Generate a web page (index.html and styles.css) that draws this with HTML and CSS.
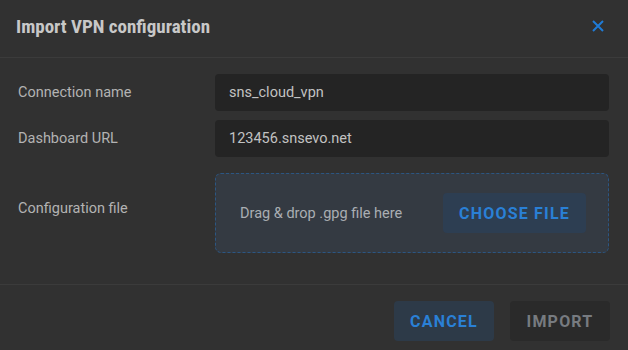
FILE: index.html
```html
<!DOCTYPE html>
<html>
<head>
<meta charset="utf-8">
<link rel="stylesheet" href="styles.css">
</head>
<body>
<div class="dialog">
  <header class="dialog-header">
    <h1 class="dialog-title">Import VPN configuration</h1>
    <button class="close-btn" aria-label="Close">
      <svg width="12" height="12" viewBox="0 0 12 12"><path d="M1 1L11 11M11 1L1 11" stroke="#1f7bd6" stroke-width="2" fill="none"/></svg>
    </button>
  </header>
  <div class="dialog-body">
    <div class="row">
      <label class="label">Connection name</label>
      <div class="input">sns_cloud_vpn</div>
    </div>
    <div class="row">
      <label class="label">Dashboard URL</label>
      <div class="input">123456.snsevo.net</div>
    </div>
    <div class="row row-file">
      <label class="label">Configuration file</label>
      <div class="dropzone">
        <span class="drop-text">Drag &amp; drop .gpg file here</span>
        <button class="btn btn-choose">Choose file</button>
      </div>
    </div>
  </div>
  <footer class="dialog-footer">
    <button class="btn btn-cancel">Cancel</button>
    <button class="btn btn-import">Import</button>
  </footer>
</div>
</body>
</html>
```
FILE: styles.css
```css
* { box-sizing: border-box; }
html, body { margin: 0; padding: 0; }
body {
  background: #313131;
  font-family: Roboto, "Liberation Sans", sans-serif;
  width: 628px;
  height: 350px;
  overflow: hidden;
}
.dialog {
  width: 628px;
  height: 350px;
  background: #313131;
  display: flex;
  flex-direction: column;
}
.dialog-header {
  height: 58px;
  border-bottom: 1px solid #3b3b3b;
  display: flex;
  align-items: center;
  justify-content: space-between;
  padding: 0 19px 0 16px;
}
.dialog-title {
  margin: 0;
  font-size: 19px;
  font-weight: 700;
  font-stretch: 85%;
  color: #c8c8c8;
  padding-bottom: 5px;
}
.close-btn {
  background: none;
  border: none;
  padding: 0;
  margin-right: 5px;
  margin-bottom: 5px;
  display: flex;
}
.dialog-body {
  flex: 1;
  padding: 16px 19px 0 18px;
  display: flex;
  flex-direction: column;
  gap: 9px;
  border-bottom: 1px solid #3b3b3b;
}
.row {
  display: flex;
  align-items: center;
}
.label {
  width: 197px;
  font-size: 14.5px;
  color: #b3b3b3;
}
.input {
  flex: 1;
  height: 37px;
  background: #242424;
  border-radius: 4px;
  padding: 0 14px;
  display: flex;
  align-items: center;
  font-size: 14.5px;
  color: #c2c2c2;
}
.row-file { margin-top: 7px; }
.row-file .label { padding-bottom: 10px; }
.dropzone {
  flex: 1;
  height: 80px;
  background: #343a42;
  border: 1px dashed #2b5683;
  border-radius: 6px;
  display: flex;
  align-items: center;
  justify-content: space-between;
  padding: 0 22px 0 24px;
}
.drop-text {
  font-size: 14.5px;
  color: #aaaeb3;
}
.btn {
  border: none;
  border-radius: 4px;
  font-family: Roboto, "Liberation Sans", sans-serif;
  font-weight: 700;
  font-size: 16px;
  letter-spacing: 1.2px;
  text-transform: uppercase;
  height: 40px;
  padding: 0;
}
.btn-choose {
  width: 143px;
  background: #2d3e52;
  color: #2a80d6;
}
.dialog-footer {
  height: 65px;
  display: flex;
  justify-content: flex-end;
  align-items: flex-start;
  gap: 16px;
  padding: 16px 18px 0 0;
}
.btn-cancel {
  width: 100px;
  background: #2d3a48;
  color: #2a80d6;
}
.btn-import {
  width: 100px;
  background: #2a2a2a;
  color: #777b80;
}
```
